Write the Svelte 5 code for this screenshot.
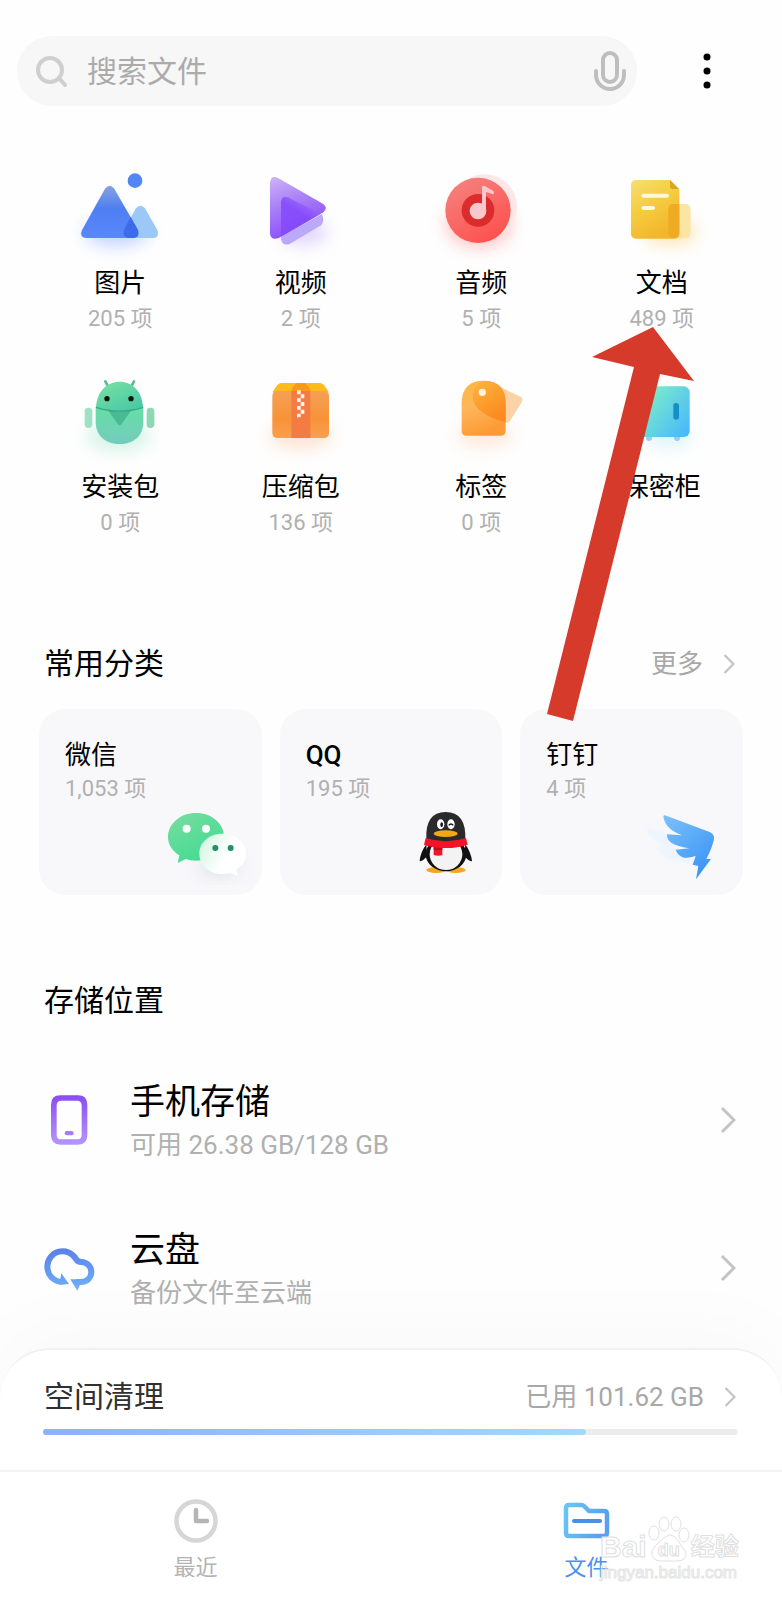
<script lang="ts">
  const categories = [
    { id: "image", name: "图片", count: "205 项", box: "1 0 360 300" },
    { id: "video", name: "视频", count: "2 项", box: "543 0 360 300" },
    { id: "audio", name: "音频", count: "5 项", box: "4 0 360 300" },
    { id: "doc", name: "文档", count: "489 项", box: "546 0 360 300" },
    { id: "apk", name: "安装包", count: "0 项", box: "1 -3 360 300" },
    { id: "zip", name: "压缩包", count: "136 项", box: "543 -3 360 300" },
    { id: "tag", name: "标签", count: "0 项", box: "4 -3 360 300" },
    { id: "safe", name: "保密柜", count: "", box: "546 -3 360 300" },
  ];

  const apps = [
    { id: "wechat", name: "微信", count: "1,053 项", box: "427 522 300 240" },
    { id: "qq", name: "QQ", count: "195 项", box: "7 522 300 240" },
    { id: "ding", name: "钉钉", count: "4 项", box: "729 522 300 240" },
  ];

  const used = 101.62;
  const total = 130;
</script>

{#snippet chevron()}
  <svg class="chevron" viewBox="0 0 16 28" aria-hidden="true">
    <path d="M2 2 14 14 2 26" fill="none" stroke="currentColor" stroke-width="3" />
  </svg>
{/snippet}

<div class="page">
  <header>
    <div class="search">
      <svg class="lens" viewBox="0 0 32 32" aria-hidden="true">
        <circle cx="14" cy="15" r="12" />
        <path d="m23 23 6 7" />
      </svg>
      <input type="text" placeholder="搜索文件" aria-label="搜索文件" />
      <button class="mic" aria-label="语音搜索">
        <svg viewBox="0 0 32 42">
          <rect x="9" y="3" width="14" height="29" rx="7" />
          <path d="M2 21v4a14 14 0 0 0 28 0v-4" />
        </svg>
      </button>
    </div>
    <button class="more" aria-label="更多选项">
      <svg viewBox="0 0 8 36">
        <circle cx="4" cy="4" r="3.5" />
        <circle cx="4" cy="18" r="3.5" />
        <circle cx="4" cy="32" r="3.5" />
      </svg>
    </button>
  </header>

  <main>
    <nav class="categories" aria-label="分类">
      {#each categories as item}
        <a href="#{item.id}">
          <svg viewBox={item.box} aria-hidden="true">
            {#if item.id === "image"}
              <defs>
                <linearGradient id="img" x1="0" y1="0" x2="0" y2="1">
                  <stop offset="0" stop-color="#86a2df" />
                  <stop offset=".45" stop-color="#4d7ef2" />
                  <stop offset="1" stop-color="#5a88fb" />
                </linearGradient>
              </defs>
              <ellipse class="glow" cx="170" cy="216" rx="96" ry="44" fill="#5b8cff" />
              <circle cx="226" cy="62" r="22" fill="#5286f6" />
              <path d="M229 145Q242 130 256 145L293 210Q300 232 282 234H205Q187 230 193 210Z" fill="#9cc8f8" />
              <path d="M136 86Q150 68 164 86L235 210Q241 232 222 234H80Q59 232 66 212Z" fill="url(#img)" />
              <path d="M213 171 235 210Q241 232 222 234H205Q187 230 193 210Z" fill="#3565e6" opacity=".8" />
            {:else if item.id === "video"}
              <defs>
                <linearGradient id="vid" x1="0" y1="0" x2=".35" y2="1">
                  <stop offset="0" stop-color="#cdb4f8" />
                  <stop offset=".5" stop-color="#a87df8" />
                  <stop offset="1" stop-color="#8b4dfb" />
                </linearGradient>
                <linearGradient id="vid2" x1="0" y1="1" x2=".7" y2="0">
                  <stop offset="0" stop-color="#8548ff" />
                  <stop offset=".6" stop-color="#8144fb" />
                  <stop offset="1" stop-color="#a273f6" />
                </linearGradient>
              </defs>
              <ellipse class="glow" cx="730" cy="216" rx="70" ry="38" fill="#a78bff" />
              <path d="M663 230 786 162Q795 184 783 196L690 251Q667 260 663 237Z" fill="#bba8f8" />
              <path d="M630 68Q633 44 654 54L790 132Q805 144 790 157L656 234Q633 242 630 222Z" fill="url(#vid)" />
              <path d="M663 230V126Q666 104 686 113L783 161 663 230Z" fill="url(#vid2)" opacity=".8" />
            {:else if item.id === "audio"}
              <defs>
                <linearGradient id="aud" x1="0" y1="0" x2=".6" y2="1">
                  <stop offset="0" stop-color="#f48683" />
                  <stop offset="1" stop-color="#fd5350" />
                </linearGradient>
              </defs>
              <ellipse class="glow" cx="178" cy="194" rx="100" ry="70" fill="#ff6464" />
              <circle cx="195" cy="140" r="97" fill="#fde6e6" />
              <circle cx="175" cy="151" r="98" fill="url(#aud)" />
              <circle cx="175" cy="151" r="49" fill="#db2b2d" />
              <circle cx="175" cy="153" r="25" fill="#f9c8cc" />
              <path d="M187 152V80Q192 74 199 80L220 92Q226 98 221 103L199 96V154Z" fill="#f9c8cc" />
            {:else if item.id === "doc"}
              <defs>
                <linearGradient id="doc" x1="0" y1="0" x2=".5" y2="1">
                  <stop offset="0" stop-color="#f6df70" />
                  <stop offset=".5" stop-color="#f5cc40" />
                  <stop offset="1" stop-color="#f3b52c" />
                </linearGradient>
              </defs>
              <ellipse class="glow" cx="750" cy="216" rx="80" ry="40" fill="#f8c038" />
              <rect x="745" y="132" width="67" height="103" rx="15" fill="#fce5a4" />
              <path d="M649 60H750L778 88V220Q778 236 762 236H649Q633 236 633 220V76Q633 60 649 60Z" fill="url(#doc)" />
              <path d="M750 60 777 87H758Q750 87 750 79Z" fill="#dca51e" />
              <path d="M760 132H778V220Q778 235 762 235Q745 235 745 220V147Q745 132 760 132Z" fill="#efab24" />
              <path d="M670 107H741M670 144H699" stroke="#fff8df" stroke-width="12" stroke-linecap="round" />
            {:else if item.id === "apk"}
              <defs>
                <linearGradient id="apk" x1="0" y1="0" x2=".8" y2="1">
                  <stop offset="0" stop-color="#7be3a2" />
                  <stop offset="1" stop-color="#49c8a6" />
                </linearGradient>
                <linearGradient id="apk2" x1="0" y1="0" x2="0" y2="1">
                  <stop offset="0" stop-color="#65dfa6" />
                  <stop offset="1" stop-color="#74cbbd" />
                </linearGradient>
              </defs>
              <ellipse class="glow" cx="175" cy="216" rx="96" ry="44" fill="#8be3be" />
              <path d="m137 49 8 15M223 49l-8 15" stroke="#5fb98d" stroke-width="8" stroke-linecap="round" />
              <rect x="75" y="128" width="23" height="61" rx="11" fill="#9ee1c3" />
              <rect x="261" y="128" width="23" height="61" rx="11" fill="#8bd8b2" />
              <path d="M108 126H251V170C251 212 222 237 180 237S108 212 108 170Z" fill="url(#apk2)" />
              <path d="M145 136H215L188 174Q180 188 172 174Z" fill="#48ba94" />
              <path d="M109 126C112 78 142 50 180 50S247 78 250 126Q180 148 109 126Z" fill="url(#apk)" />
              <path d="M109 127Q180 150 250 127" fill="none" stroke="#38a986" stroke-width="4" />
              <circle cx="142" cy="101" r="8" fill="#08140f" />
              <circle cx="214" cy="101" r="8" fill="#08140f" />
            {:else if item.id === "zip"}
              <defs>
                <linearGradient id="zip" x1="0" y1="0" x2="0" y2="1">
                  <stop offset="0" stop-color="#f5a055" />
                  <stop offset=".6" stop-color="#f89238" />
                  <stop offset="1" stop-color="#fa9f50" />
                </linearGradient>
              </defs>
              <ellipse class="glow" cx="722" cy="212" rx="94" ry="40" fill="#fbb482" />
              <path d="M664 54H780Q786 54 792 60L807 82H637L652 60Q658 54 664 54Z" fill="#fdbb1c" />
              <path d="M650 78H794Q807 79 807 94V203Q807 219 791 219H653Q637 219 637 203V94Q637 79 650 78Z" fill="url(#zip)" />
              <path d="M711 54H734Q747 64 751 78V219H694V78Q698 64 711 54Z" fill="#f47b42" />
              <path d="M711 54H734Q747 64 751 78H694Q698 64 711 54Z" fill="#f8991a" />
              <path d="M711 76h11v12h11v12h-11v-12h-11zM711 100h11v11h11v12h-11v-12h-11zM711 123h11v11h11v12h-11v-12h-11zM711 146h11v11h-11z" fill="#fff3ea" />
            {:else if item.id === "tag"}
              <defs>
                <linearGradient id="tag" x1="0" y1="0" x2=".3" y2="1">
                  <stop offset="0" stop-color="#fcb83f" />
                  <stop offset=".5" stop-color="#fdb65b" />
                  <stop offset="1" stop-color="#fd9b36" />
                </linearGradient>
                <linearGradient id="tag2" x1="0" y1="0" x2=".5" y2="1">
                  <stop offset="0" stop-color="#fcb53e" />
                  <stop offset="1" stop-color="#fc8a20" />
                </linearGradient>
              </defs>
              <ellipse class="glow" cx="195" cy="212" rx="84" ry="36" fill="#fcc79c" />
              <path d="M225 58 303 95Q312 101 307 110L271 168Q265 176 254 173L200 140Z" fill="#fcd3a6" />
              <path d="M126 112Q128 47 192 47T258 112V197Q258 212 243 212H141Q126 212 126 197Z" fill="url(#tag)" />
              <path d="M159 90Q162 55 197 48Q258 52 258 112V172Q204 158 176 132Q158 114 159 90Z" fill="url(#tag2)" />
              <circle cx="188" cy="82" r="11" fill="#fff1da" />
            {:else}
              <defs>
                <linearGradient id="safe" x1="0" y1=".2" x2="1" y2=".9">
                  <stop offset=".2" stop-color="#78e8cd" />
                  <stop offset="1" stop-color="#47b7fd" />
                </linearGradient>
              </defs>
              <ellipse class="glow" cx="745" cy="216" rx="70" ry="32" fill="#a3e2f6" />
              <circle cx="687" cy="219" r="9" fill="#9fc9f7" />
              <circle cx="771" cy="219" r="9" fill="#9fc9f7" />
              <rect x="645" y="64" width="164" height="152" rx="18" fill="url(#safe)" />
              <rect x="760" y="114" width="17" height="50" rx="8" fill="#168fc9" />
            {/if}
          </svg>
          <span class="name">{item.name}</span>
          {#if item.count}<span class="count">{item.count}</span>{/if}
        </a>
      {/each}
    </nav>

    <section>
      <div class="heading">
        <h2>常用分类</h2>
        <a class="link" href="#more">更多 {@render chevron()}</a>
      </div>
      <div class="cards">
        {#each apps as app}
          <a href="#{app.id}">
            <span class="name" class:latin={app.id === "qq"}>{app.name}</span>
            <span class="count">{app.count}</span>
            <svg viewBox={app.box} aria-hidden="true">
              {#if app.id === "wechat"}
                <defs>
                  <linearGradient id="wx" x1="0" y1="0" x2=".6" y2="1">
                    <stop offset="0" stop-color="#7bdca2" />
                    <stop offset="1" stop-color="#42dc91" />
                  </linearGradient>
                  <linearGradient id="wx2" x1="0" y1=".2" x2=".6" y2=".5">
                    <stop offset="0" stop-color="#d3f6e3" />
                    <stop offset="1" stop-color="#fff" />
                  </linearGradient>
                </defs>
                <ellipse class="glow" cx="600" cy="705" rx="66" ry="42" fill="#c6cadc" />
                <path d="M529 546C577 546 613 578 613 617S577 689 529 689Q512 689 498 684L474 696 479 673C458 660 445 641 445 617 445 578 482 546 529 546Z" fill="url(#wx)" />
                <circle cx="501" cy="593" r="12" fill="#fff" />
                <circle cx="559" cy="593" r="12" fill="#fff" />
                <path d="M609 608C649 608 679 635 679 668 679 688 668 704 650 715L654 735 631 726Q620 729 609 729C569 729 539 702 539 668S569 608 609 608Z" fill="url(#wx2)" />
                <circle cx="587" cy="651" r="9" fill="#1f9068" />
                <circle cx="633" cy="651" r="9" fill="#1f9068" />
              {:else if app.id === "qq"}
                <ellipse cx="110" cy="717" rx="30" ry="9" fill="#f7a61c" />
                <ellipse cx="168" cy="717" rx="30" ry="9" fill="#f7a61c" />
                <path d="M80 640Q62 664 60 690Q66 694 82 676ZM197 640Q214 664 217 690Q211 694 194 676Z" fill="#111" />
                <ellipse cx="139" cy="670" rx="61" ry="51" fill="#111" />
                <ellipse cx="139" cy="670" rx="49" ry="47" fill="#f3f3f4" />
                <path d="M80 626Q76 543 138 543T197 626Q140 650 80 626Z" fill="#2a2a2c" />
                <ellipse cx="123" cy="580" rx="11" ry="15" fill="#fff" />
                <ellipse cx="154" cy="580" rx="11" ry="15" fill="#fff" />
                <ellipse cx="126" cy="581" rx="4" ry="7" fill="#111" />
                <path d="M147 583q7-8 14 0" fill="none" stroke="#111" stroke-width="4" />
                <ellipse cx="138" cy="608" rx="36" ry="10" fill="#f5a713" />
                <path d="M78 621Q138 640 199 621L204 641Q168 653 128 651V673Q114 676 102 672V648Q86 646 73 642Z" fill="#f21326" />
                <path d="M102 648Q114 652 128 651V657H102Z" fill="#b80d1e" />
              {:else}
                <defs>
                  <linearGradient id="dd" x1="0" y1="0" x2=".7" y2="1">
                    <stop offset="0" stop-color="#7cc2fb" />
                    <stop offset="1" stop-color="#3c94f5" />
                  </linearGradient>
                </defs>
                <path class="faint" d="M738 592 800 606 820 650 862 682 900 700 850 694Q790 690 774 652L796 644Q750 630 738 592Z" fill="#edf4fd" />
                <path d="M790 556Q791 550 799 554L929 603Q944 610 942 624Q937 650 919 684H933L888 745 895 705 878 701 887 675Q868 682 852 680Q833 674 827 656L868 652Q828 646 812 634Q800 624 801 610L846 613Q794 594 790 556Z" fill="url(#dd)" />
              {/if}
            </svg>
          </a>
        {/each}
      </div>
    </section>

    <section class="storage">
      <div class="heading"><h2>存储位置</h2></div>
      <a href="#phone">
        <svg class="place" viewBox="54 348 192 192" aria-hidden="true">
          <defs>
            <linearGradient id="phone" x1="0" y1="0" x2="0" y2="1">
              <stop offset="0" stop-color="#8a4df0" />
              <stop offset="1" stop-color="#b596fa" />
            </linearGradient>
          </defs>
          <path fill-rule="evenodd" fill="url(#phone)" d="M121 370H174Q202 370 202 398V490Q202 518 174 518H121Q93 518 93 490V398Q93 370 121 370ZM124 386Q110 386 110 400V488Q110 502 124 502H171Q185 502 185 488V400Q185 386 171 386Z" />
          <rect x="134" y="477" width="27" height="13" rx="6" fill="#a67df8" />
        </svg>
        <span class="info">
          <strong>手机存储</strong>
          <small>可用 26.38 GB/128 GB</small>
        </span>
        {@render chevron()}
      </a>
      <a href="#cloud">
        <svg class="place" viewBox="54 102 192 192" aria-hidden="true">
          <defs>
            <linearGradient id="cloud" gradientUnits="userSpaceOnUse" x1="140" y1="138" x2="150" y2="264">
              <stop offset="0" stop-color="#5a80ea" />
              <stop offset="1" stop-color="#6db0f8" />
            </linearGradient>
          </defs>
          <path fill="none" stroke="url(#cloud)" stroke-width="18" d="M126 240C100 238 82 220 82 193A46 46 0 0 1 168 171Q173 180 184 180A30 30 0 0 1 184 240H168" />
          <path fill="url(#cloud)" d="M124 214 147 246 118 249ZM151 232H180V248L172 266Z" />
        </svg>
        <span class="info">
          <strong>云盘</strong>
          <small>备份文件至云端</small>
        </span>
        {@render chevron()}
      </a>
    </section>
  </main>

  <footer>
    <div class="cleanup">
      <div class="row">
        <h2>空间清理</h2>
        <a class="link" href="#cleanup">已用 {used} GB {@render chevron()}</a>
      </div>
      <div class="bar"><div style:width="{(used / total) * 100}%"></div></div>
    </div>
    <nav class="tabs">
      <a href="#recent">
        <svg viewBox="0 0 48 48" aria-hidden="true">
          <circle cx="24" cy="24" r="19.5" fill="none" stroke="#d6d6d6" stroke-width="4.5" />
          <path d="M24 13V24H35" fill="none" stroke="#b5b5b5" stroke-width="4.5" stroke-linecap="round" stroke-linejoin="round" />
        </svg>
        最近
      </a>
      <a href="#files" class="active">
        <svg viewBox="0 0 48 48" aria-hidden="true">
          <defs>
            <linearGradient id="folder" x1="0" y1="0" x2="1" y2=".3">
              <stop offset="0" stop-color="#67c7f3" />
              <stop offset="1" stop-color="#5aa0ee" />
            </linearGradient>
          </defs>
          <path fill="none" stroke="url(#folder)" stroke-width="4.5" stroke-linejoin="round" d="M6 8H18Q20 8 21 9L26 14H41Q44 14 44 17V36Q44 39 41 39H6Q3 39 3 36V11Q3 8 6 8Z" />
          <path d="M11 24H37" stroke="#4a8fe0" stroke-width="4" stroke-linecap="round" />
        </svg>
        文件
      </a>
    </nav>
  </footer>

  <svg class="arrow" viewBox="0 0 148 396" aria-hidden="true">
    <path d="M106 1 147 55 113 48 26 395 0 388 87 41 45 31Z" fill="#d63a2b" />
  </svg>

  <div class="mark">
    <div class="brand">
      <span class="bai">Bai</span>
      <span class="paw">
        <svg viewBox="0 0 44 46" aria-hidden="true">
          <ellipse cx="7" cy="17" rx="5" ry="7" />
          <ellipse cx="17" cy="8" rx="5" ry="7" />
          <ellipse cx="29" cy="8" rx="5" ry="7" />
          <ellipse cx="37" cy="19" rx="5" ry="7" />
          <path d="M22 19Q28 19 32 26T39 36Q40 45 30 45H13Q4 44 5 36 6 31 12 26T22 19Z" />
        </svg>
        <span>du</span>
      </span>
      <span class="han">经验</span>
    </div>
    <div class="url">jingyan.baidu.com</div>
  </div>
</div>

<style>
  :global(body) {
    margin: 0;
    background: #fefefe;
  }
  .page {
    position: relative;
    display: flex;
    flex-direction: column;
    min-height: 100vh;
    overflow: hidden;
    font-family: Roboto, "Noto Sans CJK SC", sans-serif;
    color: #000;
  }
  a {
    color: inherit;
    text-decoration: none;
  }
  button {
    border: none;
    background: none;
    padding: 0;
  }
  h2 {
    margin: 0;
    font-size: 30px;
    font-weight: 400;
    line-height: 44px;
  }
  svg {
    display: block;
    flex: none;
  }

  header {
    display: flex;
    padding: 36px 5px 0 17px;
  }
  .search {
    flex: 1;
    display: flex;
    align-items: center;
    height: 70px;
    padding: 0 11px 0 19px;
    border-radius: 35px;
    background: #f7f7f7;
  }
  .lens {
    width: 32px;
    height: 32px;
    fill: none;
    stroke: #cfcfcf;
    stroke-width: 4;
    stroke-linecap: round;
  }
  input {
    flex: 1;
    min-width: 0;
    margin-left: 19px;
    padding: 2px 0 0;
    border: none;
    outline: none;
    background: none;
    font: inherit;
    font-size: 30px;
    line-height: 44px;
  }
  input::placeholder {
    color: #ababab;
    opacity: 1;
  }
  .mic svg {
    width: 32px;
    height: 42px;
    fill: none;
    stroke: #bebebe;
    stroke-width: 4;
    stroke-linecap: round;
  }
  .more {
    width: 140px;
  }
  .more svg {
    height: 36px;
    margin: 0 auto;
  }

  .categories {
    display: grid;
    grid-template-columns: repeat(4, 1fr);
    row-gap: 29px;
    padding: 54px 30px 0;
    & a {
      display: flex;
      flex-direction: column;
      align-items: center;
    }
    & svg {
      width: 120px;
      height: 100px;
      margin-bottom: 5px;
      overflow: visible;
    }
    & .count {
      margin-top: 2px;
    }
  }
  .glow {
    filter: blur(24px);
    opacity: 0.35;
  }
  .faint {
    filter: blur(4px);
  }
  .name {
    font-size: 26px;
    line-height: 36px;
  }
  .latin {
    font-weight: 500;
  }
  .count {
    font-size: 22px;
    line-height: 32px;
    color: #b0b0b0;
  }

  .heading {
    display: flex;
    justify-content: space-between;
    align-items: center;
    padding: 0 47px 23px 44px;
  }
  section {
    margin-top: 103px;
  }
  .link {
    display: flex;
    align-items: center;
    font-size: 26px;
    line-height: 36px;
    color: #a8a8a8;
    & .chevron {
      width: 12px;
      height: 22px;
      margin-left: 20px;
    }
  }
  .chevron {
    width: 16px;
    height: 28px;
    color: #c4c4c4;
  }
  .cards {
    display: grid;
    grid-template-columns: repeat(3, 1fr);
    gap: 18px;
    padding: 0 39px;
    & a {
      display: flex;
      flex-direction: column;
      padding: 28px 0 10px 26px;
      border-radius: 26px;
      background: #f8f8fb;
    }
    & svg {
      width: 100px;
      height: 80px;
      align-self: flex-end;
    }
  }

  .storage {
    margin-top: 84px;
    & a {
      display: flex;
      align-items: center;
      height: 148px;
      padding: 0 46px 0 38px;
    }
  }
  .place {
    width: 64px;
    height: 64px;
  }
  .info {
    flex: 1;
    display: flex;
    flex-direction: column;
    margin-left: 28px;
    padding-top: 2px;
    & strong {
      font-size: 35px;
      font-weight: 400;
      line-height: 48px;
    }
    & small {
      font-size: 26px;
      line-height: 36px;
      color: #b0b0b0;
    }
  }

  footer {
    margin-top: auto;
    border-top: 2px solid #f1f1f1;
    border-radius: 50px 50px 0 0;
    background: #fff;
    box-shadow: 0 -20px 80px rgba(0, 0, 0, 0.025);
  }
  .cleanup {
    padding: 25px 44px 35px 43px;
    color: #303030;
  }
  .row {
    display: flex;
    justify-content: space-between;
    align-items: center;
    padding: 0 2px 0 1px;
  }
  .bar {
    height: 6px;
    margin-top: 10px;
    border-radius: 3px;
    background: #ececec;
    & div {
      height: 100%;
      border-radius: 3px;
      background: linear-gradient(90deg, #8db1f8, #a3d8fd);
    }
  }
  .tabs {
    display: flex;
    border-top: 2px solid #f3f3f3;
    & a {
      flex: 1;
      display: flex;
      flex-direction: column;
      align-items: center;
      padding: 25px 0 17px;
      font-size: 22px;
      line-height: 30px;
      color: #b3b3b3;
    }
    & svg {
      width: 48px;
      height: 48px;
      margin-bottom: 8px;
    }
    & .active {
      color: #4a90f0;
    }
  }

  .arrow {
    position: absolute;
    top: 326px;
    left: 547px;
    width: 148px;
    pointer-events: none;
  }

  .mark {
    position: absolute;
    right: 42px;
    bottom: 16px;
    width: 140px;
    font-family: "Liberation Sans", "Noto Sans CJK SC", sans-serif;
    color: #fffc;
    -webkit-text-stroke: 1px #e0e0e0;
    pointer-events: none;
  }
  .brand {
    display: flex;
    align-items: flex-end;
    font-weight: 700;
    line-height: 30px;
  }
  .bai {
    font-size: 30px;
  }
  .han {
    font-size: 24px;
  }
  .paw {
    position: relative;
    & svg {
      width: 44px;
      height: 46px;
      fill: #fffc;
      stroke: #e0e0e0;
    }
    & span {
      position: absolute;
      inset: auto 0 0;
      text-align: center;
      font-size: 18px;
      line-height: 24px;
    }
  }
  .url {
    font-size: 17px;
    line-height: 22px;
    color: #f4f4f4;
    -webkit-text-stroke: 1px #e6e6e6;
  }
</style>
